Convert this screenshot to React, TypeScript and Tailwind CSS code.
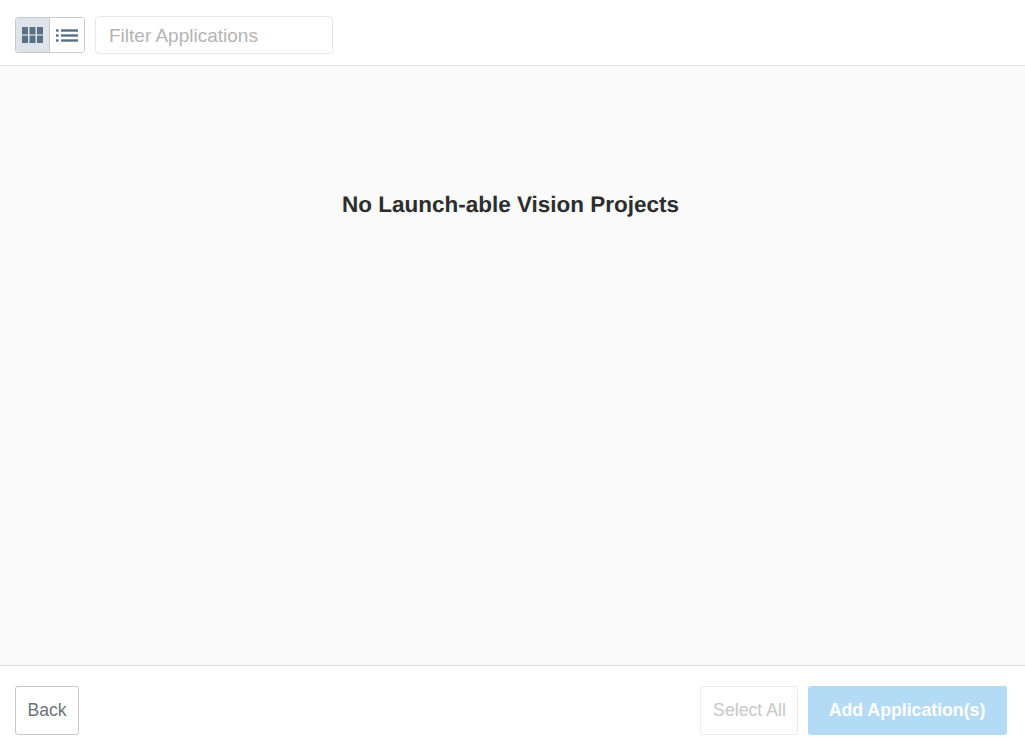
import React from 'react';

const GridIcon = () => (
  <svg width="21" height="16" viewBox="0 0 21 16" fill="#5a7086">
    <rect x="0" y="0" width="6" height="7.4" />
    <rect x="7.5" y="0" width="6" height="7.4" />
    <rect x="15" y="0" width="6" height="7.4" />
    <rect x="0" y="8.6" width="6" height="7.4" />
    <rect x="7.5" y="8.6" width="6" height="7.4" />
    <rect x="15" y="8.6" width="6" height="7.4" />
  </svg>
);

const ListIcon = () => (
  <svg width="22" height="13" viewBox="0 0 22 13" fill="#5a7086">
    <rect x="0" y="0.3" width="2.6" height="2.4" />
    <rect x="5" y="0.3" width="17" height="2.4" />
    <rect x="0" y="5.3" width="2.6" height="2.4" />
    <rect x="5" y="5.3" width="17" height="2.4" />
    <rect x="0" y="10.3" width="2.6" height="2.4" />
    <rect x="5" y="10.3" width="17" height="2.4" />
  </svg>
);

export default function App() {
  return (
    <div className="h-[748px] flex flex-col bg-white font-['Liberation_Sans',Arial,sans-serif] [text-rendering:geometricPrecision]">
      <header className="h-[66px] shrink-0 flex items-center pl-[15px] pt-[5px] border-b border-[#e8e8ec] bg-white">
        <div className="flex h-[36px] rounded-[3px] border border-[#c8ccd0] overflow-hidden">
          <button className="w-[34px] pr-[1px] flex items-center justify-center bg-[#dde4ea] border-r border-[#c8ccd0]">
            <GridIcon />
          </button>
          <button className="w-[34px] flex items-center justify-center bg-white">
            <ListIcon />
          </button>
        </div>
        <input
          placeholder="Filter Applications"
          className="ml-[10px] w-[238px] h-[38px] px-[13px] pt-[1px] rounded-[4px] border border-[#e6e8ec] text-[19px] outline-none placeholder:text-[#b4b4b4]"
        />
      </header>

      <main className="flex-1 bg-[#fafafa] pt-[124px] pr-[4px] text-center">
        <h1 className="text-[22.5px] leading-[30px] font-bold text-[#2d2d2d]">No Launch-able Vision Projects</h1>
      </main>

      <footer className="h-[83px] shrink-0 flex items-center justify-between pl-[15px] pr-[18px] pt-[6px] border-t border-[#dcdcdc] bg-white">
        <button className="w-[64px] h-[49px] rounded-[3px] border border-[#c8c8c8] text-[17.6px] text-[#6c757d] bg-white">Back</button>
        <div className="flex items-center gap-[10px]">
          <button className="w-[98px] h-[49px] pl-[1px] rounded-[3px] border border-[#ebebeb] text-[17.7px] text-[#c8c8c8] bg-white">Select All</button>
          <button className="w-[199px] h-[49px] pr-[1px] rounded-[3px] text-[17.7px] font-bold text-white bg-[#b3dbf6]">Add Application(s)</button>
        </div>
      </footer>
    </div>
  );
}
